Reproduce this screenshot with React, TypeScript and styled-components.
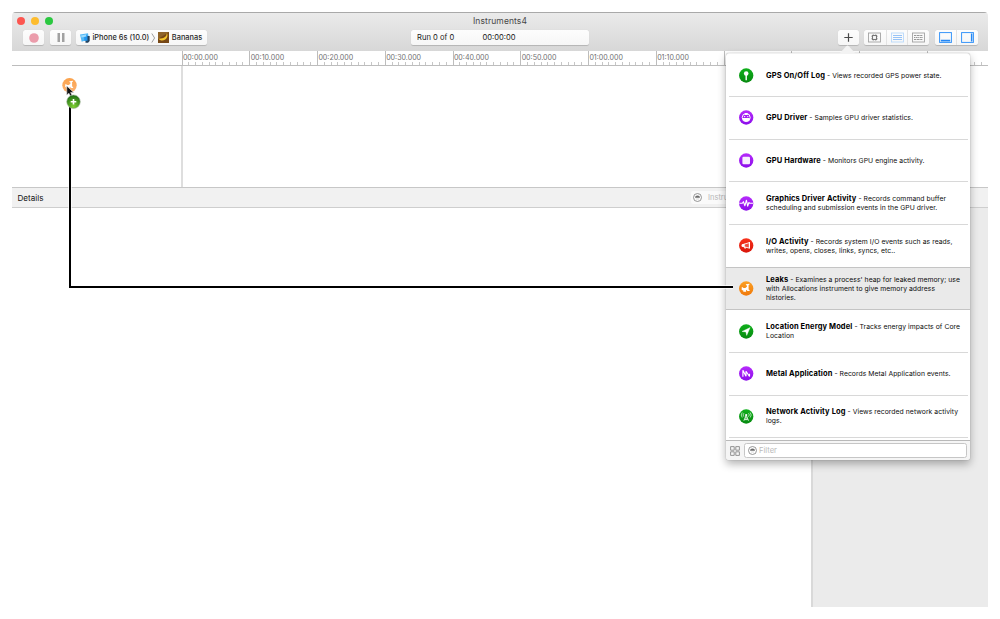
import React from 'react';
import styled, { createGlobalStyle } from 'styled-components';

const Global = createGlobalStyle`
  * { box-sizing: border-box; }
  body { margin: 0; background: #fff; font-family: Inter, "Liberation Sans", sans-serif; }
  svg { display: block; flex: none; }
`;

const Stage = styled.div`
  position: relative;
  width: 1000px;
  height: 619px;
  padding: 12px;
  overflow: hidden;
`;
const Window = styled.main`
  width: 976px;
  height: 595px;
  display: flex;
  flex-direction: column;
  border-radius: 4px 4px 0 0;
  overflow: hidden;
`;
const Toolbar = styled.header`
  height: 39px;
  flex: none;
  border-top: 1px solid #a9a9a9;
  background: linear-gradient(#eaeaea, #d7d7d7);
  display: flex;
  flex-direction: column;
`;
const TitleRow = styled.div`
  height: 16px;
  display: grid;
  grid-template-columns: 1fr auto 1fr;
  align-items: center;
  padding-left: 5px;
`;
const Lights = styled.div`
  display: flex;
  gap: 5.4px;
`;
const Light = styled.i<{ $color: string }>`
  width: 8.4px;
  height: 8.4px;
  border-radius: 50%;
  background: ${p => p.$color};
`;
const Title = styled.h1`
  margin: 0 5px 0 0;
  font-size: 8.5px;
  font-weight: 400;
  letter-spacing: 0.1px;
  color: #484848;
`;
const Controls = styled.div`
  display: flex;
  height: 16px;
  padding: 1px 10.5px 0 11px;
`;
const Button = styled.button<{ $w: number }>`
  width: ${p => p.$w}px;
  height: 15px;
  flex: none;
  padding: 0;
  border: 0;
  border-radius: 2.5px;
  background: linear-gradient(#fdfdfd, #f6f6f6);
  box-shadow: 0 0.7px 0.7px rgba(0, 0, 0, 0.17);
  display: flex;
  align-items: center;
  justify-content: center;
`;
const PauseButton = styled(Button)`
  margin-left: 6px;
`;
const Target = styled(Button)`
  margin-left: 5px;
  padding: 0 4px;
  justify-content: flex-start;
  font: 500 7.4px Inter, sans-serif;
  color: #262626;
  white-space: nowrap;
`;
const TargetLabel = styled.span<{ $w: number }>`
  width: ${p => p.$w}px;
  margin-left: 2.5px;
  text-align: left;
`;
const RunStatus = styled(Button)`
  margin-left: 204px;
  padding-left: 6px;
  justify-content: flex-start;
  font: 400 7.6px Inter, sans-serif;
  color: #1a1a1a;
`;
const RunCount = styled.span`
  width: 65.5px;
  text-align: left;
`;
const Actions = styled.div`
  margin-left: auto;
  display: flex;
  gap: 5.5px;
`;
const Segment = styled.span`
  width: 21.6px;
  height: 15px;
  display: flex;
  align-items: center;
  justify-content: center;
  & + & { border-left: 1px solid #e3e3e3; }
`;

const Ruler = styled.div`
  height: 15px;
  flex: none;
  display: flex;
  padding-left: 169.5px;
  border-bottom: 1px solid #bdbdbd;
  overflow: hidden;
`;
const Mark = styled.div`
  width: 67.75px;
  height: 14px;
  flex: none;
  border-left: 1px solid #bdbdbd;
  padding-left: 0.4px;
  display: flex;
  flex-direction: column;
  justify-content: flex-end;
  font-size: 7.1px;
  line-height: 9px;
  color: #707070;
`;
const Ticks = styled.div`
  display: flex;
  height: 3px;
  flex: none;
  margin: 0 0 0 -0.4px;
`;
const Tick = styled.i`
  width: 6.775px;
  height: 3px;
  flex: none;
  border-right: 1px solid #c6c6c6;
`;
const Tracks = styled.section`
  height: 121px;
  flex: none;
  display: flex;
`;
const TrackNames = styled.div`
  width: 171px;
  border-right: 2px solid #dedede;
`;
const DetailBar = styled.div`
  height: 21px;
  flex: none;
  border-top: 1px solid #c7c7c7;
  border-bottom: 1px solid #cecece;
  background: #f1f1f1;
  display: flex;
  align-items: center;
  padding-left: 5.5px;
  font-size: 8.1px;
  color: #111;
`;
const InstrumentField = styled.div`
  width: 130px;
  height: 13px;
  margin-left: auto;
  margin-right: 167.5px;
  display: flex;
  align-items: center;
  gap: 6px;
  padding-left: 2.5px;
  border-radius: 2px;
  background: #fafafa;
  color: #b7b7b7;
  font-size: 7.5px;
`;
const Details = styled.section`
  flex: 1;
  display: flex;
  justify-content: flex-end;
`;
const Inspector = styled.aside`
  width: 177px;
  background: #ebebeb;
  border-left: 2px solid #d9d9d9;
`;

const Popover = styled.section`
  position: absolute;
  left: 726px;
  top: 53px;
  width: 244px;
  height: 407px;
  border-radius: 3px;
  background: #fff;
  border-top: 1.5px solid #f1f1f1;
  box-shadow: 0 0 1px rgba(0, 0, 0, 0.45), 0 4px 9px rgba(0, 0, 0, 0.3);
  display: flex;
  flex-direction: column;
`;
const Pointer = styled.svg`
  position: absolute;
  left: 839px;
  top: 45px;
`;
const Rows = styled.ul`
  margin: 0;
  padding: 0.5px 0 0;
  list-style: none;
  height: 386px;
  flex: none;
`;
const Row = styled.li<{ $selected?: boolean; $beforeSelected?: boolean }>`
  height: 42.65px;
  margin: 0 ${p => (p.$selected || p.$beforeSelected ? 0 : 2.5)}px;
  padding-left: ${p => (p.$selected || p.$beforeSelected ? 12.5 : 10)}px;
  display: flex;
  align-items: center;
  gap: 12.5px;
  background: ${p => (p.$selected ? '#eaeaea' : 'transparent')};
  border-bottom: 1px solid ${p => (p.$selected || p.$beforeSelected ? '#c4c4c4' : '#d8d8d8')};
`;
const Description = styled.p`
  margin: 0;
  font-size: 6.8px;
  line-height: 9px;
  letter-spacing: 0.055px;
  color: #0c0c0c;
  white-space: nowrap;
`;
const Name = styled.b`
  font-size: 7.5px;
  line-height: 8px;
  font-weight: 700;
  letter-spacing: 0.12px;
  color: #000;
`;
const Line = styled.span`
  display: block;
  height: 9px;
`;
const Footer = styled.footer`
  flex: 1;
  border-top: 1px solid #b9b9b9;
  border-radius: 0 0 3px 3px;
  background: #f5f5f5;
  display: flex;
  align-items: center;
  padding: 0 3px 0 4px;
  gap: 4px;
`;
const Filter = styled.div`
  flex: 1;
  height: 15px;
  border: 1px solid #c6c6c6;
  border-radius: 2.5px;
  background: #fff;
  display: flex;
  align-items: center;
  padding-left: 2.5px;
  gap: 2.5px;
  font-size: 7.6px;
  color: #bababa;
`;
const Overlay = styled.svg`
  position: absolute;
  left: 0;
  top: 0;
`;

type Kind = 'pin' | 'driver' | 'chip' | 'pulse' | 'horn' | 'leak' | 'arrow' | 'metal' | 'tower';

const ramps: Record<string, [string, string]> = {
  green: ['#0faf1b', '#078a10'],
  purple: ['#b62bfb', '#8b0dea'],
  red: ['#f8321c', '#d9150a'],
  orange: ['#fba024', '#f0790b'],
};
const colorOf: Record<Kind, string> = {
  pin: 'green', driver: 'purple', chip: 'purple', pulse: 'purple', horn: 'red',
  leak: 'orange', arrow: 'green', metal: 'purple', tower: 'green',
};

const LeakGlyph = () => (
  <path d="M3 6.3h1.2l.5.8h1.9l1.6-1.3V4.5l-1-.4v-.9l3.5-.4v.9l-.8.4v4.4l1 .4v1.2H8.4V8.7l-1 .5v1.6H4.6V9.4L3 9z" fill="#fff" />
);

const glyphs: Record<Kind, React.ReactNode> = {
  pin: <><circle cx="7.5" cy="5.5" r="2.3" fill="#fff" /><path d="M7.5 7v5.2" stroke="#fff" strokeWidth="1.4" /></>,
  driver: <><circle cx="7.5" cy="7.6" r="4" fill="none" stroke="#fff" strokeWidth="1" /><path d="M4 8h7a3.5 3.5 0 0 1-7 0zM6 3h3v1.9H6z" fill="#fff" /><circle cx="5.9" cy="6.6" r=".7" fill="#fff" /><circle cx="9.1" cy="6.6" r=".7" fill="#fff" /></>,
  chip: <rect x="3.7" y="3.7" width="7.6" height="7.6" rx="1.2" fill="#fff" fillOpacity=".93" />,
  pulse: <path d="M.6 7.3h3l1.1-1.6 1.5 4L7.7 4.2l1.3 6 1.2-3.7.8.8h3.4" fill="none" stroke="#fff" strokeWidth="1.1" strokeLinejoin="round" />,
  horn: <><path d="M3.4 6.8 10.6 4.6v5.5L3.4 8.3z" fill="#fff" fillOpacity=".2" stroke="#fff" strokeWidth=".9" strokeLinejoin="round" /><path d="M3.1 6.6 6 5.8v3.1l-2.9-.5zM10.3 4.1h1v6.5h-1zM5.2 8.9l2.3.5-.4 1.2H5.8z" fill="#fff" /></>,
  leak: <LeakGlyph />,
  arrow: <path d="M11.4 3.6 8 11.4l-.8-3.5-3.9-.4z" fill="#fff" stroke="#fff" strokeWidth=".4" />,
  metal: <path d="M4.2 10.7V4.3l3.1 6V5.2l3.5 5.3V7.7" fill="none" stroke="#fff" strokeWidth="1.15" strokeLinejoin="bevel" />,
  tower: <><path d="M7.5 6.2 5.2 11.7M7.5 6.2l2.3 5.5M6.5 9h2M6 10.6h3" fill="none" stroke="#fff" strokeWidth=".85" /><circle cx="7.5" cy="6" r="1.1" fill="#fff" /><path d="M5.2 4.2a2.5 2.5 0 0 0 0 3.5M9.8 4.2a2.5 2.5 0 0 1 0 3.5M3.5 3.5a4 4 0 0 0 0 5M11.5 3.5a4 4 0 0 1 0 5" fill="none" stroke="#fff" strokeWidth=".75" strokeOpacity=".85" /></>,
};

const InstrumentIcon = ({ kind }: { kind: Kind }) => {
  const [top, bottom] = ramps[colorOf[kind]];
  return (
    <svg width="15" height="15" viewBox="0.3 0 15 15">
      <defs>
        <linearGradient id={`g-${kind}`} x2="0" y2="1"><stop stopColor={top} /><stop offset="1" stopColor={bottom} /></linearGradient>
      </defs>
      <circle cx="7.5" cy="7.5" r="7.15" fill={`url(#g-${kind})`} />
      {glyphs[kind]}
    </svg>
  );
};

const FilterIcon = () => (
  <svg width="9" height="9" viewBox="0 0 9 9">
    <circle cx="4.5" cy="4.5" r="4" fill="none" stroke="#7d7d7d" strokeWidth=".8" />
    <path d="M2 4.7a2.5 2.2 0 0 1 5 0z" fill="#6c6c6c" />
    <path d="M3 6h3" stroke="#bbb" strokeWidth=".5" />
  </svg>
);

const items: { kind: Kind; name: string; lines: string[] }[] = [
  { kind: 'pin', name: 'GPS On/Off Log', lines: ['Views recorded GPS power state.'] },
  { kind: 'driver', name: 'GPU Driver', lines: ['Samples GPU driver statistics.'] },
  { kind: 'chip', name: 'GPU Hardware', lines: ['Monitors GPU engine activity.'] },
  { kind: 'pulse', name: 'Graphics Driver Activity', lines: ['Records command buffer', 'scheduling and submission events in the GPU driver.'] },
  { kind: 'horn', name: 'I/O Activity', lines: ['Records system I/O events such as reads,', 'writes, opens, closes, links, syncs, etc..'] },
  { kind: 'leak', name: 'Leaks', lines: ["Examines a process' heap for leaked memory; use", 'with Allocations instrument to give memory address', 'histories.'] },
  { kind: 'arrow', name: 'Location Energy Model', lines: ['Tracks energy impacts of Core', 'Location'] },
  { kind: 'metal', name: 'Metal Application', lines: ['Records Metal Application events.'] },
  { kind: 'tower', name: 'Network Activity Log', lines: ['Views recorded network activity', 'logs.'] },
];
const selectedIndex = 5;
const marks = ['00:00.000', '00:10.000', '00:20.000', '00:30.000', '00:40.000', '00:50.000', '01:00.000', '01:10.000', '', '', '', ''];
const ticks = Array.from({ length: 9 }, (_, i) => i);

export default function App() {
  return (
    <Stage>
      <Global />
      <Window>
        <Toolbar>
          <TitleRow>
            <Lights><Light $color="#fc5650" /><Light $color="#fdbc2e" /><Light $color="#2bc840" /></Lights>
            <Title>Instruments4</Title>
          </TitleRow>
          <Controls>
            <Button $w={21} aria-label="Record"><svg width="10" height="10"><circle cx="5" cy="5" r="4.8" fill="#eb9cab" /></svg></Button>
            <PauseButton $w={21} aria-label="Pause"><svg width="8" height="9"><path d="M.5 0H3v9H.5zM5 0h2.5v9H5z" fill="#a1a1a1" /></svg></PauseButton>
            <Target $w={131}>
              <svg width="10" height="10" viewBox="0 0 10 10">
                <path d="M0 1.5 8 .3l1 6L1.7 8.7z" fill="#54b8f5" />
                <path d="M5.5 3h4.2v5L8 9.7H5.5z" fill="#24435f" /><path d="M4.2 2.2h3.3v5.5H4.2z" fill="#2196ef" /><path d="M1 2.6 6 1.5l.3 2L1.6 4.4z" fill="#9edcfd" />
              </svg>
              <TargetLabel $w={60.5}>iPhone 6s (10.0)</TargetLabel>
              <svg width="5" height="10"><path d="M.8 .5 3.6 5 .8 9.5" fill="none" stroke="#777" strokeWidth=".7" /></svg>
              <svg width="13" height="11" viewBox="0 0 13 11">
                <rect x="2" width="11" height="11" fill="#774816" /><path d="M2 0h11L2 7z" fill="#8f642b" />
                <path d="M10.6 1.6c.3 3-2 4.8-8 5.2 1.5 2.1 4.5 2.3 6.7.7 2-1.4 2.6-3.7 1.9-5.9z" fill="#f5c62b" />
              </svg>
              <TargetLabel $w={32}>Bananas</TargetLabel>
            </Target>
            <RunStatus $w={178}><RunCount>Run 0 of 0</RunCount><span>00:00:00</span></RunStatus>
            <Actions>
              <Button $w={21} aria-label="Add"><svg width="9" height="9"><path d="M4.5 .3v8.4M.3 4.5h8.4" stroke="#4a4a4a" strokeWidth="1.2" /></svg></Button>
              <Button $w={65} as="div">
                <Segment><svg width="13" height="11" viewBox="0 0 13 11"><rect x=".5" y="1" width="12" height="9" fill="none" stroke="#a3a3a3" strokeWidth=".9" /><rect x="4.5" y="3.5" width="4" height="4" fill="none" stroke="#777" strokeWidth="1.1" /><path d="M3 4.3h1M3 6.7h1M9 4.3h1M9 6.7h1M5.3 2v1M7.7 2v1M5.3 8v1M7.7 8v1" stroke="#999" strokeWidth=".6" /></svg></Segment>
                <Segment><svg width="13" height="11" viewBox="0 0 13 11"><rect x=".5" y="1" width="12" height="9" fill="none" stroke="#b9d9fb" strokeWidth=".9" /><path d="M2 3.5h9M2 5.5h9M2 7.5h9" stroke="#8abcf6" strokeWidth=".9" /></svg></Segment>
                <Segment><svg width="13" height="11" viewBox="0 0 13 11"><rect x=".5" y="1" width="12" height="9" fill="none" stroke="#a3a3a3" strokeWidth=".9" /><path d="M2 3.5h9M2 7.5h9" stroke="#8c8c8c" strokeWidth=".9" strokeDasharray="2 .6 3 .6" /><path d="M2 5.5h9" stroke="#8c8c8c" strokeWidth=".9" strokeDasharray="1 .6 2 .6" /></svg></Segment>
              </Button>
              <Button $w={43} as="div">
                <Segment><svg width="13" height="11" viewBox="0 0 13 11"><rect x=".6" y=".6" width="11.8" height="9.8" fill="none" stroke="#2e90f9" strokeWidth=".95" /><path d="M1.8 7.8h9.4v1.6H1.8z" fill="#2387f5" /></svg></Segment>
                <Segment><svg width="13" height="11" viewBox="0 0 13 11"><rect x=".6" y=".6" width="11.8" height="9.8" fill="none" stroke="#2e90f9" strokeWidth=".95" /><path d="M9.9 1.6h1.5v7.8H9.9z" fill="#2387f5" /></svg></Segment>
              </Button>
            </Actions>
          </Controls>
        </Toolbar>
        <Ruler>
          {marks.map((m, i) => (
            <Mark key={i}>{m}<Ticks>{ticks.map(t => <Tick key={t} />)}</Ticks></Mark>
          ))}
        </Ruler>
        <Tracks><TrackNames /></Tracks>
        <DetailBar>Details<InstrumentField><FilterIcon />Instruments</InstrumentField></DetailBar>
        <Details><Inspector /></Details>
      </Window>

      <Popover>
        <Rows>
          {items.map((item, i) => (
            <Row key={item.name} $selected={i === selectedIndex} $beforeSelected={i === selectedIndex - 1}>
              <InstrumentIcon kind={item.kind} />
              <Description>
                {item.lines.map((line, n) => (
                  <Line key={line}>{n === 0 && <><Name>{item.name}</Name> - </>}{line}</Line>
                ))}
              </Description>
            </Row>
          ))}
        </Rows>
        <Footer>
          <svg width="10" height="10" viewBox="0 0 10 10"><path d="M.6.6h3.6v3.6H.6zM5.8.6h3.6v3.6H5.8zM.6 5.8h3.6v3.6H.6zM5.8 5.8h3.6v3.6H5.8z" fill="none" stroke="#8a8a8a" strokeWidth=".9" /></svg>
          <Filter><FilterIcon />Filter</Filter>
        </Footer>
      </Popover>
      <Pointer width="17" height="9"><path d="M0 9 7.2 1.2Q8.5 0 9.8 1.2L17 9z" fill="#f3f3f3" /></Pointer>

      <Overlay width="740" height="300">
        <path d="M70 104v183h663" fill="none" stroke="#fff" strokeOpacity=".7" strokeWidth="4" />
        <path d="M70 104v183h663" fill="none" stroke="#000" strokeWidth="2" />
        <defs>
          <linearGradient id="drag" x2="0" y2="1"><stop stopColor="#fba24b" /><stop offset="1" stopColor="#fcb373" /></linearGradient>
          <radialGradient id="plus" cy=".85" r=".75"><stop stopColor="#7fd034" /><stop offset="1" stopColor="#257615" /></radialGradient>
        </defs>
        <circle cx="69.5" cy="85.3" r="7.2" fill="url(#drag)" />
        <g transform="translate(62.2 78)"><LeakGlyph /></g>
        <path d="M66.8 86v9l2.1-1.8 1.5 3 1.7-.8-1.5-3h3z" fill="#111" stroke="#ddd" strokeWidth=".6" />
        <circle cx="73.5" cy="101.7" r="6.8" fill="url(#plus)" stroke="#aab5a6" strokeWidth=".6" />
        <path d="M73.5 98.9v5.6M70.7 101.7h5.6" stroke="#fff" strokeWidth="1.6" />
      </Overlay>
    </Stage>
  );
}
